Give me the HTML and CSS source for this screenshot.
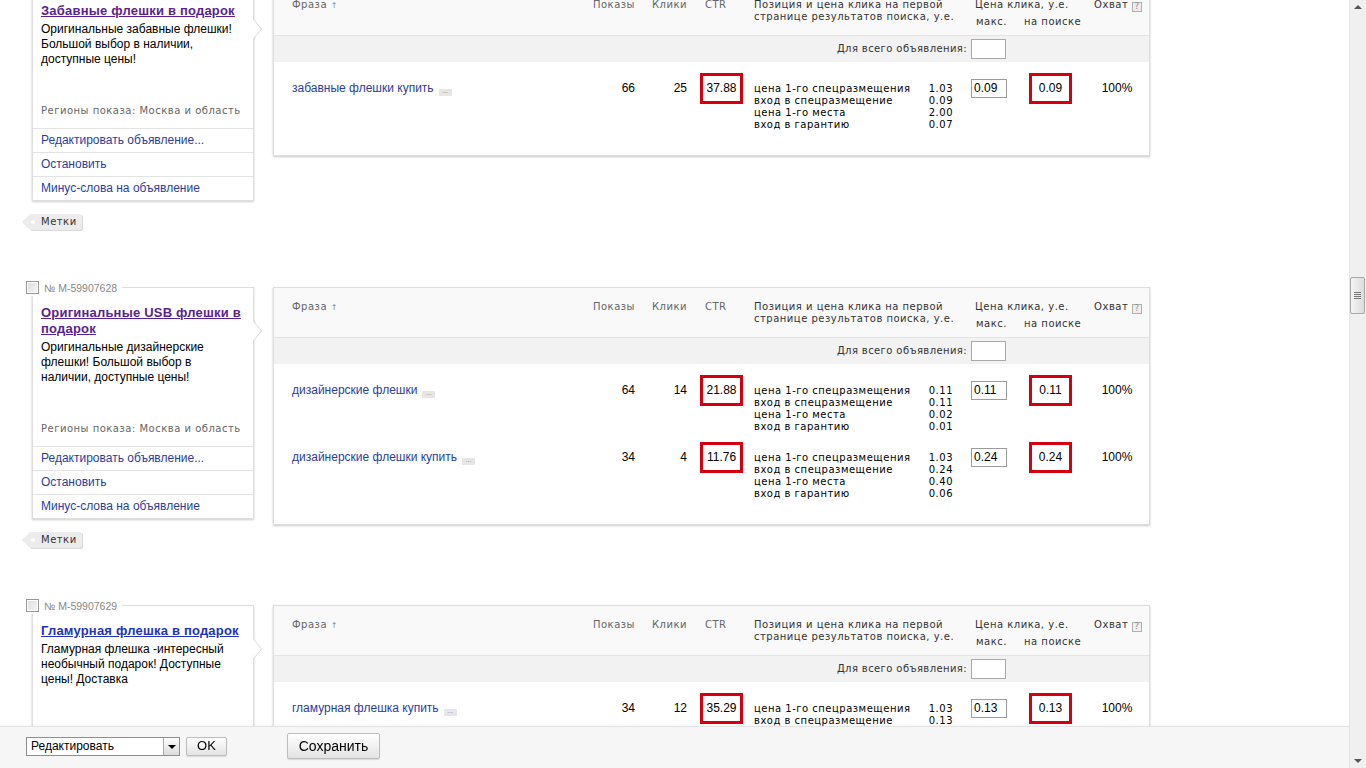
FILE: index.html
```html
<!DOCTYPE html>
<html lang="ru">
<head>
<meta charset="utf-8">
<title>Объявления</title>
<link rel="stylesheet" href="styles.css">
</head>
<body>
<div class="viewport">
  <div class="content">
    <div class="page">

      <!-- Block 1 -->
      <div class="ad-block">
        <div class="ad-side">
          <div class="ad-card">
            <div class="ad-num"><span class="cb"></span>№ M-59907627</div>
            <span class="ad-arrow"></span>
            <div class="ad-body">
              <a class="ad-title visited" href="#">Забавные флешки в подарок</a>
              <div class="ad-text">Оригинальные забавные флешки! Большой выбор в наличии, доступные цены!</div>
              <div class="ad-region">Регионы показа: Москва и область</div>
            </div>
            <ul class="ad-actions">
              <li><a href="#">Редактировать объявление...</a></li>
              <li><a href="#">Остановить</a></li>
              <li><a href="#">Минус-слова на объявление</a></li>
            </ul>
          </div>
          <div class="tag">Метки</div>
        </div>
        <div class="phrases">
          <table class="ph-table">
            <colgroup>
              <col class="c-phrase"><col class="c-shows"><col class="c-clicks"><col class="c-ctr"><col class="c-pos"><col class="c-max"><col class="c-search"><col class="c-cover">
            </colgroup>
            <thead>
              <tr class="head">
                <th class="h-phrase">Фраза <span class="sort">↑</span></th>
                <th class="h-num">Показы</th>
                <th class="h-num">Клики</th>
                <th class="h-ctr">CTR</th>
                <th class="h-pos">Позиция и цена клика на первой<br>странице результатов поиска, у.е.</th>
                <th class="h-price" colspan="2">Цена клика, у.е.<div class="sub"><span class="sub-max">макс.</span><span>на поиске</span></div></th>
                <th class="h-cover">Охват <span class="help">?</span></th>
              </tr>
              <tr class="all">
                <td colspan="5" class="all-label">Для всего объявления:</td>
                <td><span class="all-input"></span></td>
                <td colspan="2"></td>
              </tr>
            </thead>
            <tbody>
              <tr class="row">
                <td class="d-phrase"><a href="#">забавные флешки купить</a><span class="more">...</span></td>
                <td class="d-num">66</td>
                <td class="d-num">25</td>
                <td class="d-ctr"><span class="hl hl-ctr">37.88</span></td>
                <td class="d-pos"><div class="pos"><span>цена 1-го спецразмещения</span><span>1.03</span><span>вход в спецразмещение</span><span>0.09</span><span>цена 1-го места</span><span>2.00</span><span>вход в гарантию</span><span>0.07</span></div></td>
                <td class="d-max"><span class="max-input">0.09</span></td>
                <td class="d-search"><span class="hl hl-search">0.09</span></td>
                <td class="d-cover">100%</td>
              </tr>
            </tbody>
          </table>
        </div>
      </div>

      <!-- Block 2 -->
      <div class="ad-block">
        <div class="ad-side">
          <div class="ad-card">
            <div class="ad-num"><span class="cb"></span>№ M-59907628</div>
            <span class="ad-arrow"></span>
            <div class="ad-body">
              <a class="ad-title visited" href="#">Оригинальные USB флешки в подарок</a>
              <div class="ad-text">Оригинальные дизайнерские флешки! Большой выбор в наличии, доступные цены!</div>
              <div class="ad-region">Регионы показа: Москва и область</div>
            </div>
            <ul class="ad-actions">
              <li><a href="#">Редактировать объявление...</a></li>
              <li><a href="#">Остановить</a></li>
              <li><a href="#">Минус-слова на объявление</a></li>
            </ul>
          </div>
          <div class="tag">Метки</div>
        </div>
        <div class="phrases">
          <table class="ph-table">
            <colgroup>
              <col class="c-phrase"><col class="c-shows"><col class="c-clicks"><col class="c-ctr"><col class="c-pos"><col class="c-max"><col class="c-search"><col class="c-cover">
            </colgroup>
            <thead>
              <tr class="head">
                <th class="h-phrase">Фраза <span class="sort">↑</span></th>
                <th class="h-num">Показы</th>
                <th class="h-num">Клики</th>
                <th class="h-ctr">CTR</th>
                <th class="h-pos">Позиция и цена клика на первой<br>странице результатов поиска, у.е.</th>
                <th class="h-price" colspan="2">Цена клика, у.е.<div class="sub"><span class="sub-max">макс.</span><span>на поиске</span></div></th>
                <th class="h-cover">Охват <span class="help">?</span></th>
              </tr>
              <tr class="all">
                <td colspan="5" class="all-label">Для всего объявления:</td>
                <td><span class="all-input"></span></td>
                <td colspan="2"></td>
              </tr>
            </thead>
            <tbody>
              <tr class="row">
                <td class="d-phrase"><a href="#">дизайнерские флешки</a><span class="more">...</span></td>
                <td class="d-num">64</td>
                <td class="d-num">14</td>
                <td class="d-ctr"><span class="hl hl-ctr">21.88</span></td>
                <td class="d-pos"><div class="pos"><span>цена 1-го спецразмещения</span><span>0.11</span><span>вход в спецразмещение</span><span>0.11</span><span>цена 1-го места</span><span>0.02</span><span>вход в гарантию</span><span>0.01</span></div></td>
                <td class="d-max"><span class="max-input">0.11</span></td>
                <td class="d-search"><span class="hl hl-search">0.11</span></td>
                <td class="d-cover">100%</td>
              </tr>
              <tr class="row">
                <td class="d-phrase"><a href="#">дизайнерские флешки купить</a><span class="more">...</span></td>
                <td class="d-num">34</td>
                <td class="d-num">4</td>
                <td class="d-ctr"><span class="hl hl-ctr">11.76</span></td>
                <td class="d-pos"><div class="pos"><span>цена 1-го спецразмещения</span><span>1.03</span><span>вход в спецразмещение</span><span>0.24</span><span>цена 1-го места</span><span>0.40</span><span>вход в гарантию</span><span>0.06</span></div></td>
                <td class="d-max"><span class="max-input">0.24</span></td>
                <td class="d-search"><span class="hl hl-search">0.24</span></td>
                <td class="d-cover">100%</td>
              </tr>
            </tbody>
          </table>
        </div>
      </div>

      <!-- Block 3 -->
      <div class="ad-block">
        <div class="ad-side">
          <div class="ad-card">
            <div class="ad-num"><span class="cb"></span>№ M-59907629</div>
            <span class="ad-arrow"></span>
            <div class="ad-body">
              <a class="ad-title" href="#">Гламурная флешка в подарок</a>
              <div class="ad-text">Гламурная флешка -интересный необычный подарок! Доступные цены! Доставка</div>
              <div class="ad-region">Регионы показа: Москва и область</div>
            </div>
            <ul class="ad-actions">
              <li><a href="#">Редактировать объявление...</a></li>
              <li><a href="#">Остановить</a></li>
              <li><a href="#">Минус-слова на объявление</a></li>
            </ul>
          </div>
          <div class="tag">Метки</div>
        </div>
        <div class="phrases">
          <table class="ph-table">
            <colgroup>
              <col class="c-phrase"><col class="c-shows"><col class="c-clicks"><col class="c-ctr"><col class="c-pos"><col class="c-max"><col class="c-search"><col class="c-cover">
            </colgroup>
            <thead>
              <tr class="head">
                <th class="h-phrase">Фраза <span class="sort">↑</span></th>
                <th class="h-num">Показы</th>
                <th class="h-num">Клики</th>
                <th class="h-ctr">CTR</th>
                <th class="h-pos">Позиция и цена клика на первой<br>странице результатов поиска, у.е.</th>
                <th class="h-price" colspan="2">Цена клика, у.е.<div class="sub"><span class="sub-max">макс.</span><span>на поиске</span></div></th>
                <th class="h-cover">Охват <span class="help">?</span></th>
              </tr>
              <tr class="all">
                <td colspan="5" class="all-label">Для всего объявления:</td>
                <td><span class="all-input"></span></td>
                <td colspan="2"></td>
              </tr>
            </thead>
            <tbody>
              <tr class="row">
                <td class="d-phrase"><a href="#">гламурная флешка купить</a><span class="more">...</span></td>
                <td class="d-num">34</td>
                <td class="d-num">12</td>
                <td class="d-ctr"><span class="hl hl-ctr">35.29</span></td>
                <td class="d-pos"><div class="pos"><span>цена 1-го спецразмещения</span><span>1.03</span><span>вход в спецразмещение</span><span>0.13</span><span>цена 1-го места</span><span>0.30</span><span>вход в гарантию</span><span>0.05</span></div></td>
                <td class="d-max"><span class="max-input">0.13</span></td>
                <td class="d-search"><span class="hl hl-search">0.13</span></td>
                <td class="d-cover">100%</td>
              </tr>
            </tbody>
          </table>
        </div>
      </div>

    </div>
  </div>
  <div class="scrollbar">
    <span class="sb-up"></span>
    <span class="sb-thumb"><i></i><i></i><i></i><i></i></span>
    <span class="sb-down"></span>
  </div>
</div>

<div class="bottom-bar">
  <div class="select"><span class="select-text">Редактировать</span><span class="select-btn"></span></div>
  <button class="btn btn-ok" type="button">OK</button>
  <button class="btn btn-save" type="button">Сохранить</button>
</div>
</body>
</html>
```

FILE: styles.css
```css
* { box-sizing: border-box; }

html, body {
  margin: 0;
  padding: 0;
  height: 100%;
  overflow: hidden;
  background: #fff;
}

body {
  font-family: "Liberation Sans", Arial, sans-serif;
  font-size: 12px;
  color: #000;
}

a { text-decoration: none; }

.viewport {
  display: flex;
  height: 768px;
}

.content {
  flex: 1;
  overflow: hidden;
}

/* page is scrolled down by 15px */
.page {
  margin-top: -15px;
  padding-left: 32px;
}

.ad-block {
  display: flex;
  align-items: flex-start;
  gap: 19px;
  margin-bottom: 57px;
}

/* ---------- left column: ad card ---------- */
.ad-side {
  width: 222px;
  flex: none;
}

.ad-card {
  position: relative;
  background: #fff;
  border: 1px solid #dedede;
  box-shadow: 0 1px 2px rgba(0, 0, 0, 0.2);
}

.ad-num {
  position: absolute;
  top: -9px;
  left: -7px;
  height: 17px;
  display: flex;
  align-items: center;
  gap: 5px;
  padding-right: 5px;
  background: #fff;
  font-size: 10.5px;
  color: #888;
}

.cb {
  width: 13px;
  height: 13px;
  border: 1px solid #979797;
  background: linear-gradient(135deg, #dcdcdc, #f6f6f6);
  box-shadow: inset 0 0 0 1px #fff;
}

.ad-arrow {
  position: absolute;
  top: 32px;
  right: -10px;
  width: 10px;
  height: 22px;
}
.ad-arrow::before,
.ad-arrow::after {
  content: "";
  position: absolute;
  top: 0;
  left: 0;
  border-left: 9px solid #d8d8d8;
  border-top: 11px solid transparent;
  border-bottom: 11px solid transparent;
}
.ad-arrow::after {
  left: -1px;
  border-left-color: #fff;
}

.ad-body {
  padding: 17px 9px 10px 8px;
}

.ad-title {
  display: block;
  font-size: 13px;
  line-height: 16px;
  font-weight: bold;
  letter-spacing: 0.2px;
  color: #2233bb;
  text-decoration: underline;
}
.ad-title.visited { color: #5c1f8e; }

.ad-text {
  margin-top: 3px;
  min-height: 82px;
  font-size: 12px;
  line-height: 15px;
  color: #000;
}

.ad-region {
  font-family: "DejaVu Sans", Verdana, sans-serif;
  font-size: 10px;
  line-height: 14px;
  letter-spacing: 0.5px;
  color: #666;
}

.ad-actions {
  list-style: none;
  margin: 0;
  padding: 0;
}
.ad-actions li {
  height: 24px;
  line-height: 23px;
  padding-left: 8px;
  border-top: 1px solid #e3e3e3;
}
.ad-actions a {
  color: #2b3d9c;
  font-size: 12px;
}

.tag {
  position: relative;
  display: inline-block;
  margin: 13px 0 0 -2px;
  height: 16px;
  line-height: 16px;
  padding: 0 5px 0 11px;
  background: #ececec;
  border-radius: 0 2px 2px 0;
  box-shadow: 1px 1px 0 #d9d9d9;
  font-family: "DejaVu Sans", Verdana, sans-serif;
  font-size: 10px;
  letter-spacing: 0.5px;
  color: #333;
}
.tag::before {
  content: "";
  position: absolute;
  left: -8px;
  top: 0;
  border-right: 8px solid #ececec;
  border-top: 8px solid transparent;
  border-bottom: 8px solid transparent;
}
.tag::after {
  content: "";
  position: absolute;
  left: 1px;
  top: 6px;
  width: 4px;
  height: 4px;
  border-radius: 50%;
  background: #fff;
}

/* ---------- right column: phrases table ---------- */
.phrases {
  width: 877px;
  flex: none;
  background: #fff;
  border: 1px solid #dedede;
  box-shadow: 0 1px 2px rgba(0, 0, 0, 0.22);
  padding-bottom: 26px;
}

.ph-table {
  width: 100%;
  border-collapse: collapse;
  table-layout: fixed;
}

.c-phrase { width: 316px; }
.c-shows  { width: 50px; }
.c-clicks { width: 52px; }
.c-ctr    { width: 56px; }
.c-pos    { width: 220px; }
.c-max    { width: 50px; }
.c-search { width: 67px; }
.c-cover  { width: 64px; }

.ph-table th,
.ph-table td {
  padding: 0;
  vertical-align: top;
}

.head {
  height: 49px;
  background: #f9f9f9;
  border-bottom: 1px solid #e4e4e4;
}
.head th {
  padding-top: 13px;
  font-family: "DejaVu Sans", Verdana, sans-serif;
  font-size: 10px;
  line-height: 12px;
  letter-spacing: 0.5px;
  font-weight: normal;
  text-align: left;
  color: #333;
}
.head .h-phrase { padding-left: 18px; color: #666; }
.head .h-num { text-align: right; padding-right: 5px; color: #666; }
.head .h-ctr { padding-left: 13px; color: #666; }
.head .h-pos { padding-left: 6px; }
.head .h-price { padding-left: 7px; }
.head .h-cover { text-align: center; padding-left: 2px; }

.sort { font-size: 8px; color: #888; }

.sub {
  display: flex;
  margin-top: 5px;
}
.sub-max {
  width: 49px;
  padding-left: 1px;
}

.help {
  display: inline-block;
  width: 10px;
  height: 10px;
  border: 1px solid #b0b0b0;
  background: #eee;
  font-size: 8px;
  line-height: 8px;
  letter-spacing: 0;
  text-align: center;
  color: #888;
  vertical-align: -1px;
}

.all {
  height: 27px;
  background: #f2f2f2;
}
.all td { vertical-align: middle; }
.all-label {
  text-align: right;
  padding-right: 1px !important;
  font-family: "DejaVu Sans", Verdana, sans-serif;
  font-size: 10px;
  letter-spacing: 0.4px;
  color: #333;
}
.all-input {
  display: block;
  margin-left: 3px;
  width: 35px;
  height: 20px;
  background: #fff;
  border: 1px solid #a9a9a9;
}

.row td { padding-top: 11px; }

.d-phrase {
  padding-left: 18px !important;
  line-height: 31px;
  white-space: nowrap;
}
.d-phrase a { color: #2b3d9c; }
.more {
  display: inline-block;
  margin-left: 5px;
  width: 13px;
  height: 7px;
  background: #e6e6e6;
  font-size: 7px;
  line-height: 3px;
  text-align: center;
  color: #888;
  vertical-align: -1px;
}

.d-num {
  text-align: right;
  padding-right: 5px !important;
  line-height: 31px;
}

.hl {
  display: block;
  margin-top: 0;
  border: 3px solid #d4000f;
  text-align: center;
  height: 31px;
  line-height: 25px;
}
.hl-ctr {
  margin-left: 8px;
  width: 43px;
}
.hl-search {
  margin-left: 11px;
  width: 43px;
}

.d-pos { padding-left: 6px !important; }
.pos {
  margin: 10px 0 -2px;
  width: 199px;
  display: grid;
  grid-template-columns: 1fr auto;
  font-family: "DejaVu Sans", Verdana, sans-serif;
  font-size: 10px;
  line-height: 12px;
  letter-spacing: 0.5px;
  color: #000;
}

.max-input {
  display: block;
  margin: 6px 0 0 3px;
  width: 36px;
  height: 19px;
  padding-left: 2px;
  line-height: 17px;
  border: 1px solid #9c9c9c;
  background: #fff;
}

.d-cover {
  text-align: center;
  line-height: 31px;
}

/* ---------- scrollbar ---------- */
.scrollbar {
  position: relative;
  width: 17px;
  flex: none;
  background: #f0f0f0;
  border-left: 1px solid #e6e6e6;
}
.sb-up,
.sb-down {
  position: absolute;
  left: 4px;
  border-left: 4px solid transparent;
  border-right: 4px solid transparent;
}
.sb-up { top: 5px; border-bottom: 4px solid #555; }
.sb-down { bottom: 5px; border-top: 4px solid #555; }
.sb-thumb {
  position: absolute;
  top: 277px;
  left: 0;
  width: 15px;
  height: 37px;
  border: 1px solid #a8a8a8;
  border-radius: 2px;
  background: linear-gradient(90deg, #f4f4f4, #dcdcdc);
  display: flex;
  flex-direction: column;
  align-items: center;
  justify-content: center;
  gap: 1px;
}
.sb-thumb i {
  display: block;
  width: 7px;
  height: 1px;
  background: #777;
}

/* ---------- bottom fixed bar ---------- */
.bottom-bar {
  position: fixed;
  left: 0;
  bottom: 0;
  width: 1349px;
  height: 42px;
  display: flex;
  align-items: center;
  padding: 0 0 3px 26px;
  background: #f6f6f6;
  border-top: 1px solid #e3e3e3;
  box-shadow: 0 -1px 2px rgba(0, 0, 0, 0.04);
}

.select {
  position: relative;
  display: flex;
  align-items: center;
  width: 154px;
  height: 19px;
  background: #fff;
  border: 1px solid #8e8e8e;
}
.select-text {
  flex: 1;
  padding-left: 4px;
  font-size: 12px;
}
.select-btn {
  position: relative;
  width: 16px;
  height: 17px;
  border-left: 1px solid #aaa;
  background: linear-gradient(#fdfdfd, #dcdcdc);
}
.select-btn::after {
  content: "";
  position: absolute;
  left: 4px;
  top: 7px;
  border-left: 4px solid transparent;
  border-right: 4px solid transparent;
  border-top: 4px solid #000;
}

.btn {
  font-family: "Liberation Sans", Arial, sans-serif;
  color: #000;
  border: 1px solid #bdbdbd;
  border-radius: 2px;
  background: linear-gradient(#ffffff, #e3e3e3);
  box-shadow: 0 1px 1px rgba(0, 0, 0, 0.12);
  padding: 0;
}
.btn-ok {
  margin-left: 6px;
  width: 41px;
  height: 19px;
  font-size: 13px;
  line-height: 16px;
}
.btn-save {
  margin-left: 60px;
  width: 93px;
  height: 26px;
  font-size: 14px;
}
```
